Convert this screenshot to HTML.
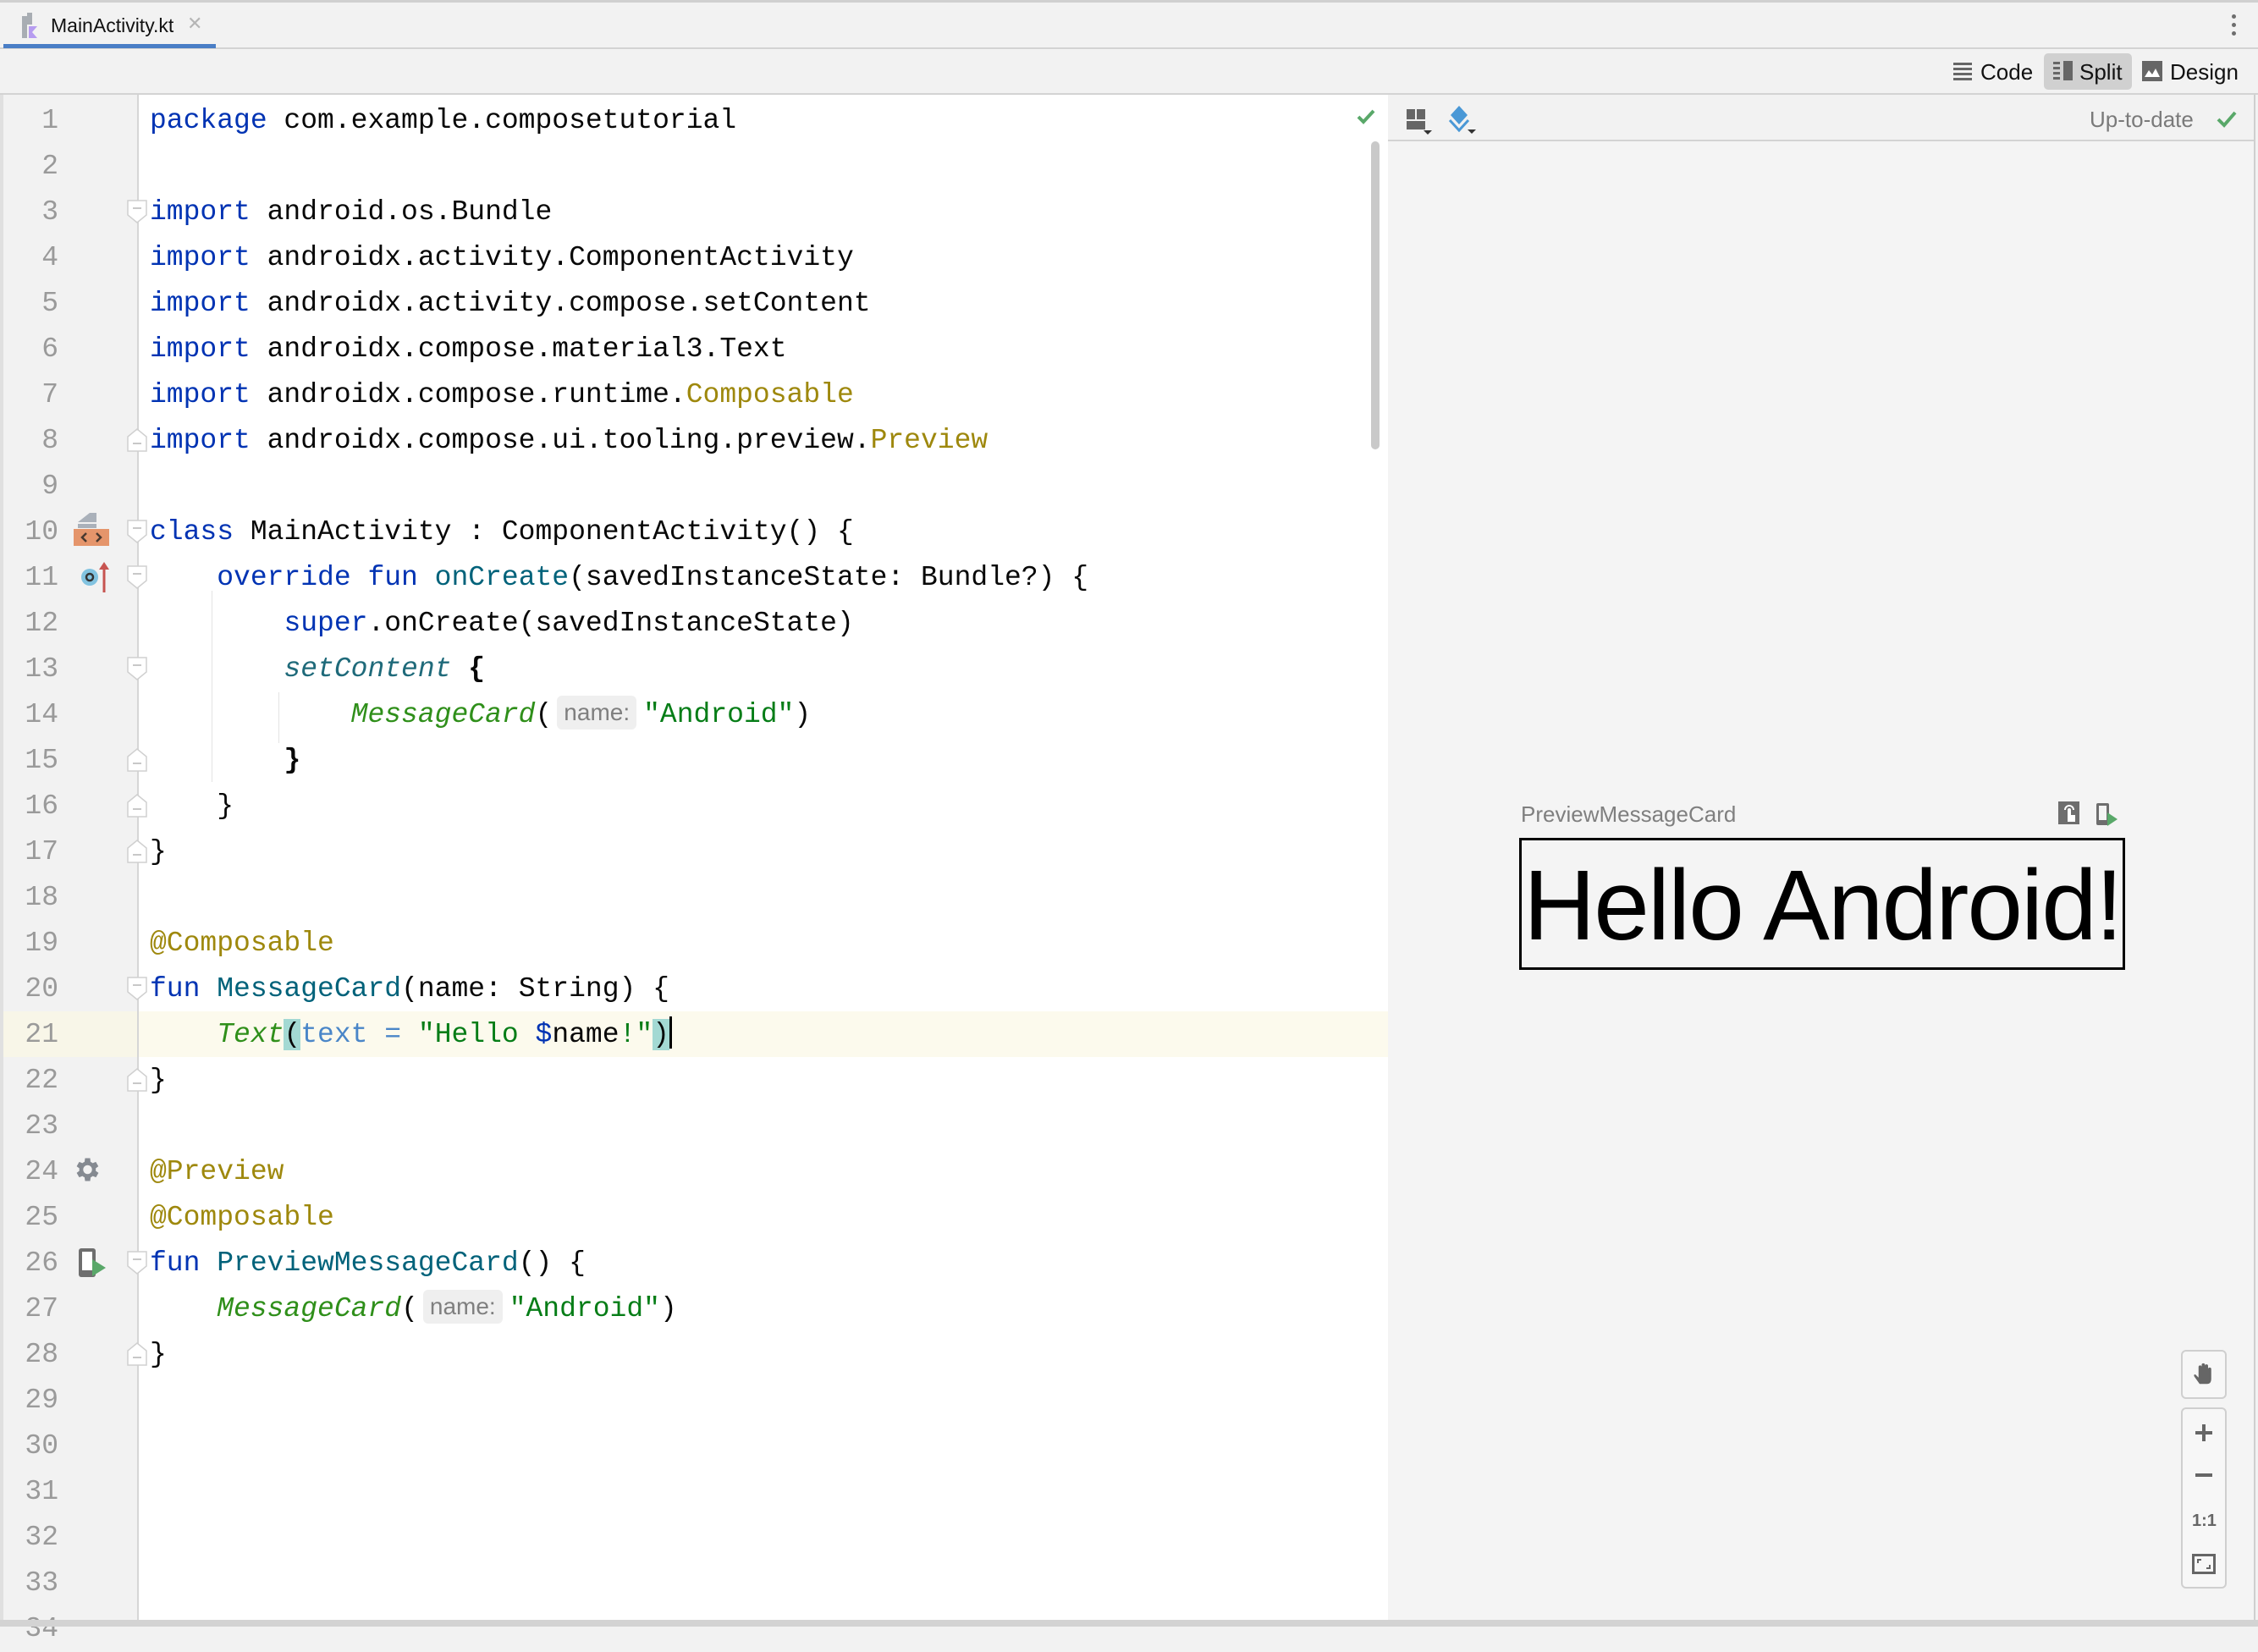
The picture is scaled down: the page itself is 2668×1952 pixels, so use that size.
<!DOCTYPE html>
<html><head><meta charset="utf-8"><style>
*{margin:0;padding:0;box-sizing:border-box}
body{width:2668px;height:1922px;background:#f2f2f2;position:relative;overflow:hidden;font-family:"Liberation Sans",sans-serif}
.abs{position:absolute}
.ln{position:absolute;left:0;width:69px;text-align:right;font:33px/54px "Liberation Mono",monospace;color:#9a9a9a;margin-top:3px}
.cl{position:absolute;left:177px;font:33px/54px "Liberation Mono",monospace;color:#080808;white-space:pre;margin-top:3px}
.k{color:#0033b3}.f{color:#00627a}.s{color:#067d17}.a{color:#9e880d}
.ci{color:#2f8f1a;font-style:italic}.st{color:#1f6a7a;font-style:italic}.na{color:#4a86c8}
.hint{display:inline-block;font:28px/40px "Liberation Sans",sans-serif;color:#7f7f7f;background:#efefef;border-radius:6px;padding:0 8px;margin:0 8px 0 6px;vertical-align:2px}
.fold{position:absolute;left:150px;width:24px;height:28px}
</style></head><body>
<!-- tab bar -->
<div class="abs" style="left:0;top:0;width:2668px;height:3px;background:#d0d0d0"></div>
<div class="abs" style="left:0;top:56px;width:2668px;height:2px;background:#d3d3d3"></div>
<div class="abs" style="left:4px;top:52px;width:251px;height:5px;background:#4a7ec6"></div>
<svg class="abs" style="left:24px;top:15px" width="28" height="32"><rect x="2" y="4" width="6" height="26" fill="#a8adb3"/><rect x="8" y="0" width="6" height="14" fill="#a8adb3"/><polygon points="10,16 20,16 14,23 20,30 10,30" fill="#b69cf0"/></svg>
<div class="abs" style="left:60px;top:16px;font-size:23px;line-height:28px;color:#111">MainActivity.kt</div>
<div class="abs" style="left:221px;top:15px;font-size:22px;color:#b5b5b5">✕</div>
<div class="abs" style="left:2637px;top:17px;width:5px;height:5px;border-radius:3px;background:#6e6e6e;box-shadow:0 10px 0 #6e6e6e,0 20px 0 #6e6e6e"></div>
<!-- toolbar row 2 -->
<div class="abs" style="left:0;top:110px;width:2668px;height:2px;background:#d3d3d3"></div>
<svg class="abs" style="left:2308px;top:73px" width="22" height="22"><g fill="#666"><rect y="1" width="22" height="3"/><rect y="7" width="22" height="3"/><rect y="13" width="22" height="3"/><rect y="19" width="22" height="3"/></g></svg>
<div class="abs" style="left:2340px;top:69px;font-size:26px;line-height:32px;color:#111">Code</div>
<div class="abs" style="left:2415px;top:63px;width:104px;height:43px;background:#d0d0d0;border-radius:5px"></div>
<svg class="abs" style="left:2426px;top:72px" width="24" height="24"><g fill="#666"><rect y="1" width="8" height="3"/><rect y="7" width="8" height="3"/><rect y="13" width="8" height="3"/><rect y="19" width="8" height="3"/><rect x="12" y="0" width="11" height="23"/></g></svg>
<div class="abs" style="left:2457px;top:69px;font-size:26px;line-height:32px;color:#111">Split</div>
<svg class="abs" style="left:2531px;top:72px" width="24" height="24"><rect width="24" height="24" fill="#666"/><polygon points="3,19 8,11 12,16 16,9 21,19" fill="#fff"/></svg>
<div class="abs" style="left:2564px;top:69px;font-size:26px;line-height:32px;color:#111">Design</div>
<!-- editor -->
<div class="abs" style="left:0;top:112px;width:4px;height:1808px;background:#e0e0e0"></div>
<div class="abs" style="left:4px;top:112px;width:159px;height:1806px;background:#f2f2f2"></div>
<div class="abs" style="left:162px;top:112px;width:2px;height:1806px;background:#d6d6d6"></div>
<div class="abs" style="left:164px;top:112px;width:1476px;height:1806px;background:#fff"></div>
<div class="abs" style="left:4px;top:1195px;width:158px;height:54px;background:#f8f6e8"></div>
<div class="abs" style="left:164px;top:1195px;width:1476px;height:54px;background:#fcfaed"></div>
<!-- scrollbar/check -->
<div class="abs" style="left:1620px;top:167px;width:10px;height:364px;border-radius:5px;background:#c9c9c9"></div>
<svg class="abs" style="left:1603px;top:128px" width="22" height="20"><path d="M2 10 L8 16 L20 3" stroke="#59a869" stroke-width="4" fill="none"/></svg>
<!-- indent guides -->
<div class="abs" style="left:250px;top:698px;width:1px;height:226px;background:#e3e3e3"></div>
<div class="abs" style="left:329px;top:818px;width:1px;height:60px;background:#e3e3e3"></div>

<div class="ln" style="top:113px">1</div><div class="ln" style="top:167px">2</div><div class="ln" style="top:221px">3</div><div class="ln" style="top:275px">4</div><div class="ln" style="top:329px">5</div><div class="ln" style="top:383px">6</div><div class="ln" style="top:437px">7</div><div class="ln" style="top:491px">8</div><div class="ln" style="top:545px">9</div><div class="ln" style="top:599px">10</div><div class="ln" style="top:653px">11</div><div class="ln" style="top:707px">12</div><div class="ln" style="top:761px">13</div><div class="ln" style="top:815px">14</div><div class="ln" style="top:869px">15</div><div class="ln" style="top:923px">16</div><div class="ln" style="top:977px">17</div><div class="ln" style="top:1031px">18</div><div class="ln" style="top:1085px">19</div><div class="ln" style="top:1139px">20</div><div class="ln" style="top:1193px">21</div><div class="ln" style="top:1247px">22</div><div class="ln" style="top:1301px">23</div><div class="ln" style="top:1355px">24</div><div class="ln" style="top:1409px">25</div><div class="ln" style="top:1463px">26</div><div class="ln" style="top:1517px">27</div><div class="ln" style="top:1571px">28</div><div class="ln" style="top:1625px">29</div><div class="ln" style="top:1679px">30</div><div class="ln" style="top:1733px">31</div><div class="ln" style="top:1787px">32</div><div class="ln" style="top:1841px">33</div><div class="ln" style="top:1895px">34</div>

<div class="cl" style="top:113px"><span class="k">package</span> com.example.composetutorial</div>
<div class="cl" style="top:221px"><span class="k">import</span> android.os.Bundle</div>
<div class="cl" style="top:275px"><span class="k">import</span> androidx.activity.ComponentActivity</div>
<div class="cl" style="top:329px"><span class="k">import</span> androidx.activity.compose.setContent</div>
<div class="cl" style="top:383px"><span class="k">import</span> androidx.compose.material3.Text</div>
<div class="cl" style="top:437px"><span class="k">import</span> androidx.compose.runtime.<span class="a">Composable</span></div>
<div class="cl" style="top:491px"><span class="k">import</span> androidx.compose.ui.tooling.preview.<span class="a">Preview</span></div>
<div class="cl" style="top:599px"><span class="k">class</span> MainActivity : ComponentActivity() {</div>
<div class="cl" style="top:653px">    <span class="k">override fun</span> <span class="f">onCreate</span>(savedInstanceState: Bundle?) {</div>
<div class="cl" style="top:707px">        <span class="k">super</span>.onCreate(savedInstanceState)</div>
<div class="cl" style="top:761px">        <span class="st">setContent</span> <b>{</b></div>
<div class="cl" style="top:815px">            <span class="ci">MessageCard</span>(<span class="hint">name:</span><span class="s">"Android"</span>)</div>
<div class="cl" style="top:869px">        <b>}</b></div>
<div class="cl" style="top:923px">    }</div>
<div class="cl" style="top:977px">}</div>
<div class="cl" style="top:1085px"><span class="a">@Composable</span></div>
<div class="cl" style="top:1139px"><span class="k">fun</span> <span class="f">MessageCard</span>(name: String) {</div>
<div class="cl" style="top:1193px">    <span class="ci">Text</span><span style="background:#a3d9d3">(</span><span class="na">text =</span> <span class="s">"Hello </span><span class="k">$</span>name<span class="s">!"</span><span style="background:#a3d9d3">)</span><span style="display:inline-block;width:3px;height:38px;background:#000;vertical-align:-8px"></span></div>
<div class="cl" style="top:1247px">}</div>
<div class="cl" style="top:1355px"><span class="a">@Preview</span></div>
<div class="cl" style="top:1409px"><span class="a">@Composable</span></div>
<div class="cl" style="top:1463px"><span class="k">fun</span> <span class="f">PreviewMessageCard</span>() {</div>
<div class="cl" style="top:1517px">    <span class="ci">MessageCard</span>(<span class="hint">name:</span><span class="s">"Android"</span>)</div>
<div class="cl" style="top:1571px">}</div>

<svg class="fold" style="top:236px" viewBox="0 0 24 28"><path d="M1 1H23V18L12 27L1 18Z" fill="#fff" stroke="#d0d0d0" stroke-width="1.5"/><path d="M7 10H17" stroke="#c8c8c8" stroke-width="2"/></svg>
<svg class="fold" style="top:614px" viewBox="0 0 24 28"><path d="M1 1H23V18L12 27L1 18Z" fill="#fff" stroke="#d0d0d0" stroke-width="1.5"/><path d="M7 10H17" stroke="#c8c8c8" stroke-width="2"/></svg>
<svg class="fold" style="top:668px" viewBox="0 0 24 28"><path d="M1 1H23V18L12 27L1 18Z" fill="#fff" stroke="#d0d0d0" stroke-width="1.5"/><path d="M7 10H17" stroke="#c8c8c8" stroke-width="2"/></svg>
<svg class="fold" style="top:776px" viewBox="0 0 24 28"><path d="M1 1H23V18L12 27L1 18Z" fill="#fff" stroke="#d0d0d0" stroke-width="1.5"/><path d="M7 10H17" stroke="#c8c8c8" stroke-width="2"/></svg>
<svg class="fold" style="top:1154px" viewBox="0 0 24 28"><path d="M1 1H23V18L12 27L1 18Z" fill="#fff" stroke="#d0d0d0" stroke-width="1.5"/><path d="M7 10H17" stroke="#c8c8c8" stroke-width="2"/></svg>
<svg class="fold" style="top:1478px" viewBox="0 0 24 28"><path d="M1 1H23V18L12 27L1 18Z" fill="#fff" stroke="#d0d0d0" stroke-width="1.5"/><path d="M7 10H17" stroke="#c8c8c8" stroke-width="2"/></svg>
<svg class="fold" style="top:506px" viewBox="0 0 24 28"><path d="M1 27H23V10L12 1L1 10Z" fill="#fff" stroke="#d0d0d0" stroke-width="1.5"/><path d="M7 18H17" stroke="#c8c8c8" stroke-width="2"/></svg>
<svg class="fold" style="top:884px" viewBox="0 0 24 28"><path d="M1 27H23V10L12 1L1 10Z" fill="#fff" stroke="#d0d0d0" stroke-width="1.5"/><path d="M7 18H17" stroke="#c8c8c8" stroke-width="2"/></svg>
<svg class="fold" style="top:938px" viewBox="0 0 24 28"><path d="M1 27H23V10L12 1L1 10Z" fill="#fff" stroke="#d0d0d0" stroke-width="1.5"/><path d="M7 18H17" stroke="#c8c8c8" stroke-width="2"/></svg>
<svg class="fold" style="top:992px" viewBox="0 0 24 28"><path d="M1 27H23V10L12 1L1 10Z" fill="#fff" stroke="#d0d0d0" stroke-width="1.5"/><path d="M7 18H17" stroke="#c8c8c8" stroke-width="2"/></svg>
<svg class="fold" style="top:1262px" viewBox="0 0 24 28"><path d="M1 27H23V10L12 1L1 10Z" fill="#fff" stroke="#d0d0d0" stroke-width="1.5"/><path d="M7 18H17" stroke="#c8c8c8" stroke-width="2"/></svg>
<svg class="fold" style="top:1586px" viewBox="0 0 24 28"><path d="M1 27H23V10L12 1L1 10Z" fill="#fff" stroke="#d0d0d0" stroke-width="1.5"/><path d="M7 18H17" stroke="#c8c8c8" stroke-width="2"/></svg>

<!-- gutter icons -->
<svg class="abs" style="left:86px;top:605px" width="44" height="46"><polygon points="20,1 28,1 28,12 6,12 20,1" fill="#aab1ba"/><rect x="6" y="14" width="22" height="5" fill="#aab1ba"/><rect x="1" y="20" width="42" height="20" fill="#e5956b"/><path d="M16 25 L11 30 L16 35 M28 25 L33 30 L28 35" stroke="#4a3a30" stroke-width="2.5" fill="none"/></svg>
<svg class="abs" style="left:94px;top:662px" width="36" height="40"><circle cx="12" cy="20" r="10" fill="#82c3e0"/><circle cx="12" cy="20" r="4" fill="none" stroke="#333" stroke-width="2.5"/><path d="M29 38 V6" stroke="#c75450" stroke-width="3"/><polygon points="23,11 29,2 35,11" fill="#c75450"/></svg>
<svg class="abs" style="left:84px;top:1364px" width="36" height="36" viewBox="0 0 24 24"><path fill="#858a91" d="M19.4 13a7.5 7.5 0 0 0 0-2l2.1-1.6-2-3.5-2.5 1a7 7 0 0 0-1.7-1L15 3h-4l-.4 2.9a7 7 0 0 0-1.7 1l-2.5-1-2 3.5L6.5 11a7.5 7.5 0 0 0 0 2l-2.1 1.6 2 3.5 2.5-1a7 7 0 0 0 1.7 1L11 21h4l.4-2.9a7 7 0 0 0 1.7-1l2.5 1 2-3.5zM13 15.5A3.5 3.5 0 1 1 13 8.5a3.5 3.5 0 0 1 0 7z"/></svg>
<svg class="abs" style="left:91px;top:1474px" width="36" height="38"><rect x="2" y="1" width="20" height="34" rx="3" fill="#6e6e6e"/><rect x="6" y="5" width="12" height="22" fill="#fff"/><polygon points="18,14 34,24 18,34" fill="#59a869"/></svg>

<!-- preview pane -->
<div class="abs" style="left:1640px;top:112px;width:1024px;height:1804px;background:#f4f4f4"></div>
<div class="abs" style="left:1640px;top:112px;width:1024px;height:55px;background:#f2f2f2;border-bottom:2px solid #d3d3d3"></div>
<div class="abs" style="left:2663px;top:112px;width:2px;height:1806px;background:#cfcfcf"></div>
<svg class="abs" style="left:1660px;top:128px" width="34" height="32"><rect x="2" y="1" width="10" height="12" fill="#666"/><rect x="14" y="1" width="10" height="12" fill="#666"/><rect x="2" y="15" width="22" height="10" fill="#666"/><polygon points="22,26 32,26 27,31" fill="#333"/></svg>
<svg class="abs" style="left:1710px;top:124px" width="36" height="36"><polygon points="14,1 24,12 14,23 4,12" fill="#4a98d6"/><path d="M3 18 L14 30 L25 18" stroke="#4a98d6" stroke-width="3" fill="none"/><polygon points="24,29 34,29 29,34" fill="#333"/></svg>
<div class="abs" style="left:2469px;top:125px;font-size:26px;line-height:32px;color:#7a7a7a">Up-to-date</div>
<svg class="abs" style="left:2619px;top:130px" width="24" height="22"><path d="M2 11 L9 18 L22 3" stroke="#59a869" stroke-width="4" fill="none"/></svg>

<div class="abs" style="left:1797px;top:946px;font-size:26px;line-height:32px;color:#7f7f7f">PreviewMessageCard</div>
<svg class="abs" style="left:2432px;top:947px" width="26" height="28"><rect width="25" height="27" fill="#6e6e6e"/><path d="M11 24 V10 a2 2 0 0 1 4 0 V16 h5 v8" fill="#fff"/><path d="M8 10 a5 5 0 0 1 10 0" stroke="#fff" stroke-width="2" fill="none"/></svg>
<svg class="abs" style="left:2476px;top:948px" width="28" height="30"><rect x="1" y="1" width="15" height="26" rx="2" fill="#6e6e6e"/><rect x="4" y="4" width="9" height="17" fill="#f4f4f4"/><polygon points="14,12 26,20 14,28" fill="#59a869"/></svg>
<div class="abs" style="left:1795px;top:990px;width:716px;height:156px;border:3px solid #000;background:#f4f4f4"></div>
<div class="abs" style="left:1800px;top:1000px;font-size:118px;line-height:140px;letter-spacing:-2px;color:#000;white-space:nowrap">Hello Android!</div>

<!-- zoom controls -->
<div class="abs" style="left:2577px;top:1595px;width:54px;height:58px;border:2px solid #cfcfcf;border-radius:6px;background:#f7f7f7"></div>
<svg class="abs" style="left:2589px;top:1609px" width="30" height="30" viewBox="0 0 24 24"><path fill="#666" d="M8 21 L3 14 Q2 12 4 12 L7 15 V5 a1.5 1.5 0 0 1 3 0 V11 V3 a1.5 1.5 0 0 1 3 0 V11 V4 a1.5 1.5 0 0 1 3 0 V12 V7 a1.5 1.5 0 0 1 3 0 V16 Q19 21 15 21 Z"/></svg>
<div class="abs" style="left:2577px;top:1663px;width:54px;height:214px;border:2px solid #cfcfcf;border-radius:6px;background:#f7f7f7"></div>
<div class="abs" style="left:2594px;top:1691px;width:20px;height:4px;background:#666"></div>
<div class="abs" style="left:2602px;top:1683px;width:4px;height:20px;background:#666"></div>
<div class="abs" style="left:2594px;top:1741px;width:20px;height:4px;background:#666"></div>
<div class="abs" style="left:2590px;top:1784px;font-size:20px;font-weight:bold;line-height:26px;color:#666">1:1</div>
<svg class="abs" style="left:2590px;top:1836px" width="28" height="24"><rect x="1.5" y="1.5" width="25" height="21" fill="none" stroke="#666" stroke-width="3"/><path d="M7 11 V7 H11 M21 13 V17 H17" stroke="#666" stroke-width="2" fill="none"/></svg>
<div class="abs" style="left:0;top:1914px;width:2668px;height:8px;background:#d3d3d3"></div>
</body></html>
